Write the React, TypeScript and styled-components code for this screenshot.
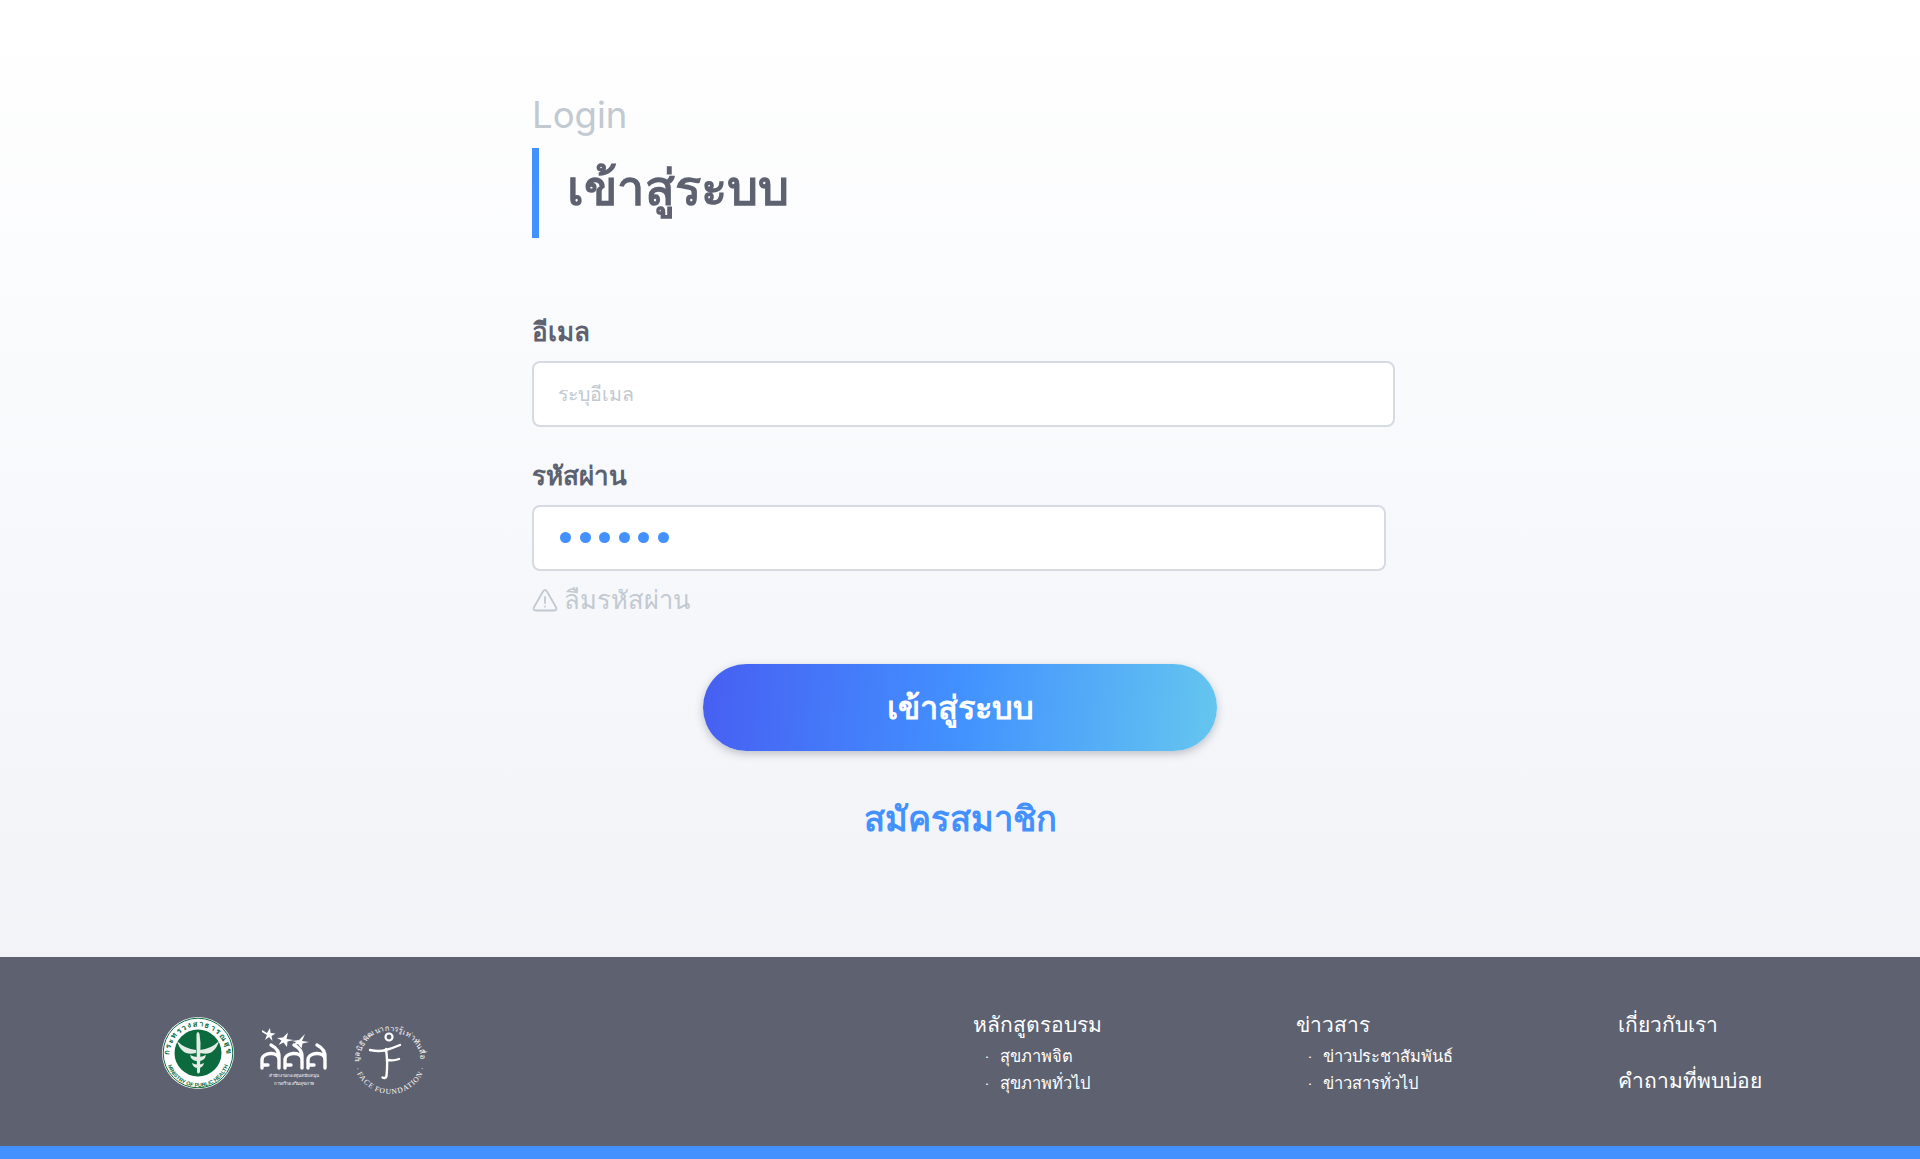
import React from "react";
import styled, { createGlobalStyle } from "styled-components";

const Global = createGlobalStyle`
  html, body { margin: 0; padding: 0; }
  body { font-family: "Lato", "Noto Sans", "Open Sans", "DejaVu Sans", sans-serif; color: #5e6170; }
  * { box-sizing: border-box; }
`;
const Page = styled.div`display:flex;flex-direction:column;width:1920px;height:1159px;overflow:hidden;`;
const Main = styled.main`height:957px;background:linear-gradient(180deg,#ffffff 0%,#f1f3f8 100%);padding-top:90px;`;
const Form = styled.form`width:856px;margin:0 auto;display:flex;flex-direction:column;`;
const Kicker = styled.div`font-family:"Inter","Lato",sans-serif;font-weight:400;font-size:36.500px;line-height:50px;color:#c2c9d1;height:58px;`;
const Title = styled.h1`margin:0;border-left:7px solid #4291ff;height:90px;padding:0 0 0 28px;font-size:49px;line-height:77px;font-weight:600;color:#5e6170;`;
const Label = styled.label`font-size:26px;line-height:36px;font-weight:600;color:#5e6170;margin-bottom:12px;`;
const EmailLabel = styled(Label)`margin-top:75px;`;
const PasswordLabel = styled(Label)`margin-top:30px;`;
const Field = styled.div<{ $w: number }>`width:${p => p.$w}px;height:66px;flex:none;background:#fff;border:2px solid #d5dae3;border-radius:8px;display:flex;align-items:center;padding-left:24px;`;
const Placeholder = styled.span`font-size:19.500px;line-height:1;color:#c2c9d1;`;
const Dots = styled.div`display:flex;gap:8.500px;padding-left:2px;margin-top:-2px;`;
const Dot = styled.i`width:11px;height:11px;border-radius:50%;background:#4291ff;display:block;`;
const Forgot = styled.div`display:flex;align-items:center;gap:6px;margin-top:11px;height:36px;font-size:25.500px;font-weight:300;color:#c2c9d1;`;
const Submit = styled.button`align-self:center;margin-top:46px;width:514px;height:87px;border:0;border-radius:44px;background:linear-gradient(95deg,#475ff2 0%,#4291ff 50%,#65c6ef 100%);box-shadow:0 3px 8px rgba(60,70,90,.3);color:#fff;font-family:inherit;font-size:32.500px;font-weight:600;line-height:1;`;
const Signup = styled.a`align-self:center;margin-top:42px;font-size:34.500px;line-height:50px;font-weight:600;color:#4291ff;`;
const Footer = styled.footer`flex:1;background:#5e6170;border-bottom:13px solid #4291ff;display:flex;color:#fff;padding:52px 0 0 162px;`;
const Logos = styled.div`display:flex;align-items:flex-start;gap:26px;width:811px;flex:none;`;
const LogoSlot = styled.div<{ $top: number; $left?: number }>`margin-top:${p => p.$top}px;margin-left:${p => p.$left ?? 0}px;line-height:0;`;
const Col = styled.div<{ $w: number }>`width:${p => p.$w}px;flex:none;display:flex;flex-direction:column;`;
const Head = styled.div<{ $mb?: number }>`font-size:21px;line-height:30px;font-weight:300;margin-bottom:${p => p.$mb ?? 4}px;`;
const Sub = styled.div`font-size:16.500px;line-height:27px;padding-left:12px;display:flex;gap:11px;font-weight:300;`;

const G = "#0b6b3f";
const Moph = () => (
  <svg width="72" height="72" viewBox="0 0 72 72">
    <defs>
      <path id="mt" d="M7.500 38A28.500 28.500 0 0 1 64.500 38" />
      <path id="mb" d="M4 38A32 32 0 0 0 68 38" />
    </defs>
    <circle cx="36" cy="36" r="36" fill="#fff" />
    <circle cx="36" cy="36" r="34.800" fill="none" stroke={G} strokeWidth="1" />
    <circle cx="36" cy="36" r="23.500" fill={G} />
    <text fontSize="7.500" fontWeight="700" fill={G}><textPath href="#mt" textLength="88">กระทรวงสาธารณสุข</textPath></text>
    <text fontSize="5.400" fontWeight="700" fill={G} fontFamily="Liberation Sans, sans-serif" textAnchor="middle"><textPath href="#mb" startOffset="50%">MINISTRY OF PUBLIC HEALTH</textPath></text>
    <g fill="#e4ece6">
      <path d="M15 24q8 8 19 9v3q-9 2-13-2-4-3-6-10ZM57 24q-8 8-19 9v3q9 2 13-2 4-3 6-10Z" />
      <path d="M34.500 17q1.500-4 3 0l1 9-.5 29q-2 3-3 0l-.5-29Z" />
      <path d="M28 38q8 4 16 0-1 6-8 6t-8-6ZM30 46q6 3 12 0-1 5-6 5t-6-5Z" />
    </g>
  </svg>
);
const SoLetter = ({ x }: { x: number }) => (
  <path transform={`translate(${x} 0)`} d="M2 41V33c0-8 16-9 17-1V41M2 38h6M19 31.500q1-9-8-13.500" />
);
const Sss = () => (
  <svg width="68" height="60" viewBox="0 0 68 60" fill="none">
    <g fill="#fff">
      <path d="M2 3l5 3 3-5 .5 5 5 .5-4 2.500 1 5-3.500-4-4 3 2-5-5-3Z" />
      <path d="M17 11l6-.5 5-5-1.500 6.500 7 1-6 1.500-.5 5.500-3.500-4.500-5 2.500 3-4.500Z" />
      <path d="M32 14l7-1 6-6-3 7 7 1-6.500 1.500-1 5-3.500-4.500-5 2 3-4Z" />
    </g>
    <g stroke="#fff" strokeWidth="3.400" strokeLinecap="round" strokeLinejoin="round">
      <SoLetter x={0} />
      <SoLetter x={23} />
      <SoLetter x={46} />
    </g>
    <text x="34" y="50" textAnchor="middle" fontSize="4.400" fill="#fff">สำนักงานกองทุนสนับสนุน</text>
    <text x="34" y="58" textAnchor="middle" fontSize="4.400" fill="#fff">การสร้างเสริมสุขภาพ</text>
  </svg>
);
const Face = () => (
  <svg width="80" height="76" viewBox="-4 -4 80 76" fill="none">
    <defs>
      <path id="ftop" d="M5 36A31 31 0 0 1 67 36" />
      <path id="fbot" d="M5 30A31 32 0 0 0 67 30" />
    </defs>
    <text fontSize="7.500" fill="#fff"><textPath href="#ftop" textLength="95">มูลนิธิพัฒนาการรู้เท่าทันสื่อ</textPath></text>
    <text fontSize="7.500" fill="#fff" fontFamily="Liberation Serif, serif" textAnchor="middle" dominantBaseline="hanging"><textPath href="#fbot" startOffset="50%">· FACE FOUNDATION ·</textPath></text>
    <circle cx="35" cy="11" r="3.500" stroke="#fff" strokeWidth="2.200" />
    <path d="M16 24q9 2 16 0t14-5M32 23q2 14 .5 27-1 3-4 1.500M34 34q6 1 11-1" stroke="#fff" strokeWidth="2.400" strokeLinecap="round" />
  </svg>
);
const Warn = () => (
  <svg width="26" height="24" viewBox="0 0 26 24" fill="none" stroke="#c2c9d1" strokeWidth="1.800" strokeLinecap="round" strokeLinejoin="round">
    <path d="M11 3.500 1.800 19.500q-1 2.800 2 3h18.400q3-.2 2-3L15 3.500q-2-3-4 0Z" />
    <path d="M13 9v6M13 18.500v.2" />
  </svg>
);

export default function App() {
  return (
    <Page>
      <Global />
      <Main>
        <Form>
          <Kicker>Login</Kicker>
          <Title>เข้าสู่ระบบ</Title>
          <EmailLabel>อีเมล</EmailLabel>
          <Field $w={863}><Placeholder>ระบุอีเมล</Placeholder></Field>
          <PasswordLabel>รหัสผ่าน</PasswordLabel>
          <Field $w={854}><Dots>{[0, 1, 2, 3, 4, 5].map(i => <Dot key={i} />)}</Dots></Field>
          <Forgot><Warn />ลืมรหัสผ่าน</Forgot>
          <Submit type="button">เข้าสู่ระบบ</Submit>
          <Signup>สมัครสมาชิก</Signup>
        </Form>
      </Main>
      <Footer>
        <Logos>
          <LogoSlot $top={8}><Moph /></LogoSlot>
          <LogoSlot $top={18}><Sss /></LogoSlot>
          <LogoSlot $top={13} $left={-4}><Face /></LogoSlot>
        </Logos>
        <Col $w={323}>
          <Head>หลักสูตรอบรม</Head>
          <Sub><span>·</span>สุขภาพจิต</Sub>
          <Sub><span>·</span>สุขภาพทั่วไป</Sub>
        </Col>
        <Col $w={322}>
          <Head>ข่าวสาร</Head>
          <Sub><span>·</span>ข่าวประชาสัมพันธ์</Sub>
          <Sub><span>·</span>ข่าวสารทั่วไป</Sub>
        </Col>
        <Col $w={200}>
          <Head $mb={26}>เกี่ยวกับเรา</Head>
          <Head>คำถามที่พบบ่อย</Head>
        </Col>
      </Footer>
    </Page>
  );
}
